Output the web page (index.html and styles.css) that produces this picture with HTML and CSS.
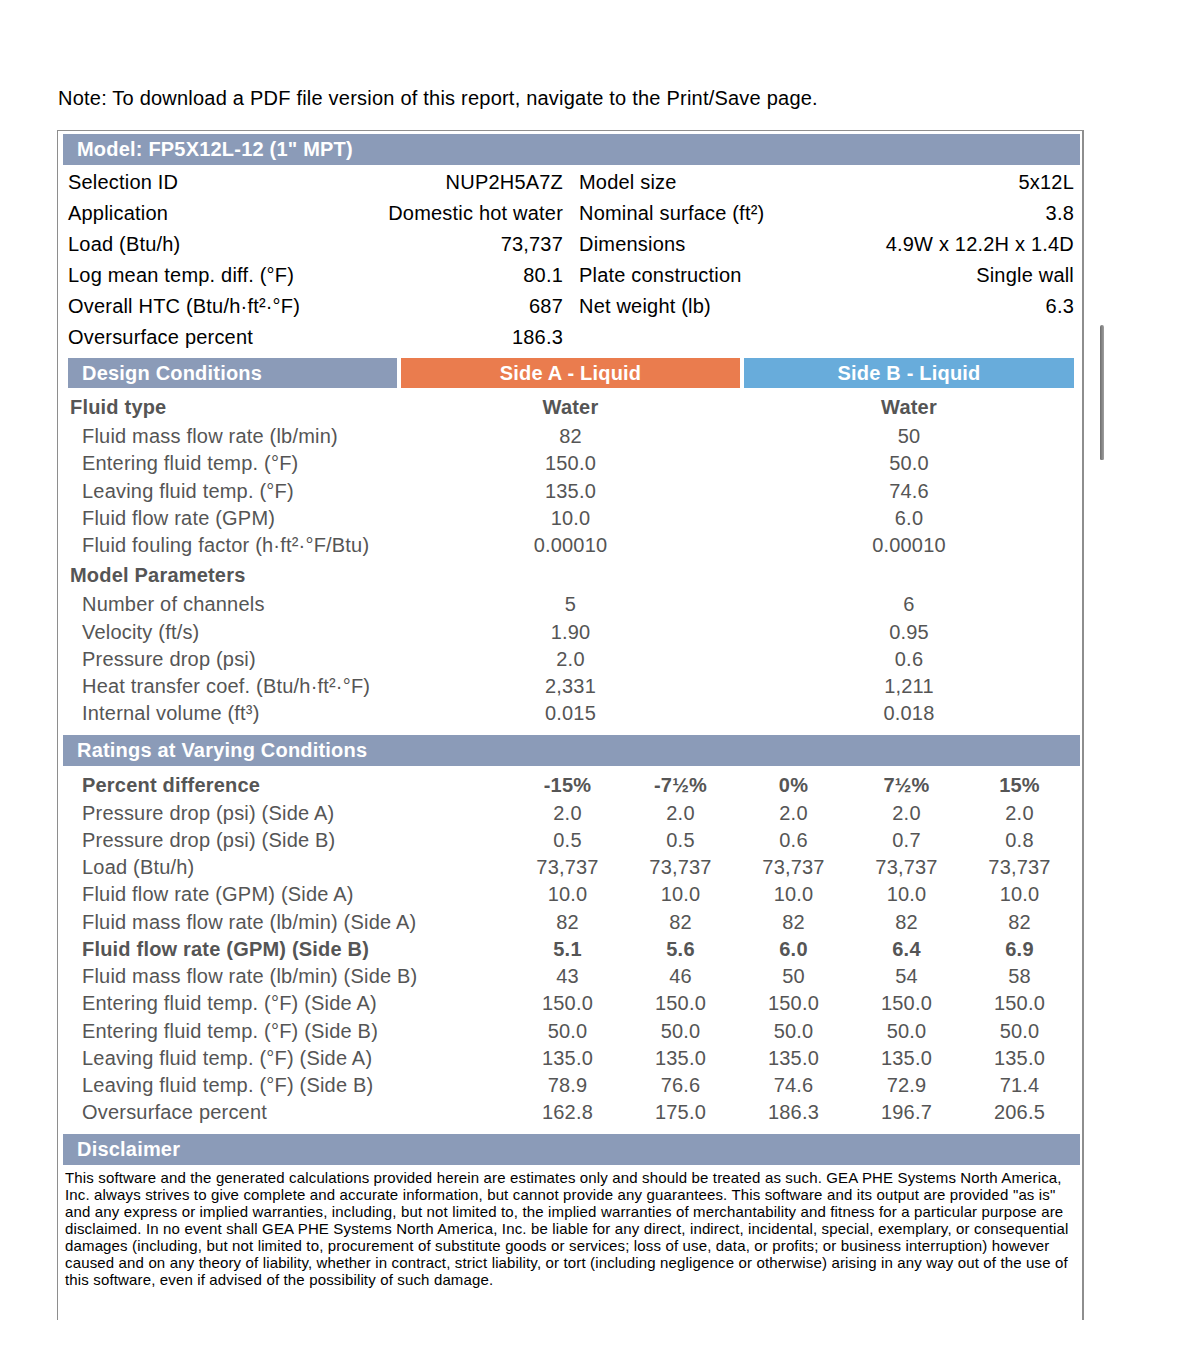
FILE: index.html
```html
<!DOCTYPE html>
<html>
<head>
<meta charset="utf-8">
<link rel="stylesheet" href="styles.css">
</head>
<body>
<div class="page">
  <p class="note">Note: To download a PDF file version of this report, navigate to the Print/Save page.</p>
  <div class="report">
    <div class="band">Model: FP5X12L-12 (1" MPT)</div>
    <div class="summary">
      <div class="pair"><span>Selection ID</span><span>NUP2H5A7Z</span></div>
      <div class="pair"><span>Model size</span><span>5x12L</span></div>
      <div class="pair"><span>Application</span><span>Domestic hot water</span></div>
      <div class="pair"><span>Nominal surface (ft²)</span><span>3.8</span></div>
      <div class="pair"><span>Load (Btu/h)</span><span>73,737</span></div>
      <div class="pair"><span>Dimensions</span><span>4.9W x 12.2H x 1.4D</span></div>
      <div class="pair"><span>Log mean temp. diff. (°F)</span><span>80.1</span></div>
      <div class="pair"><span>Plate construction</span><span>Single wall</span></div>
      <div class="pair"><span>Overall HTC (Btu/h·ft²·°F)</span><span>687</span></div>
      <div class="pair"><span>Net weight (lb)</span><span>6.3</span></div>
      <div class="pair"><span>Oversurface percent</span><span>186.3</span></div>
      <div class="pair"></div>
    </div>

    <div class="design">
      <div class="dhead dh-label">Design Conditions</div>
      <div class="dhead dh-a">Side A - Liquid</div>
      <div class="dhead dh-b">Side B - Liquid</div>

      <div class="drow bold"><span class="dl group">Fluid type</span><span class="dv">Water</span><span class="dv">Water</span></div>
      <div class="drow"><span class="dl">Fluid mass flow rate (lb/min)</span><span class="dv">82</span><span class="dv">50</span></div>
      <div class="drow"><span class="dl">Entering fluid temp. (°F)</span><span class="dv">150.0</span><span class="dv">50.0</span></div>
      <div class="drow"><span class="dl">Leaving fluid temp. (°F)</span><span class="dv">135.0</span><span class="dv">74.6</span></div>
      <div class="drow"><span class="dl">Fluid flow rate (GPM)</span><span class="dv">10.0</span><span class="dv">6.0</span></div>
      <div class="drow"><span class="dl">Fluid fouling factor (h·ft²·°F/Btu)</span><span class="dv">0.00010</span><span class="dv">0.00010</span></div>
      <div class="drow bold"><span class="dl group">Model Parameters</span><span class="dv"></span><span class="dv"></span></div>
      <div class="drow"><span class="dl">Number of channels</span><span class="dv">5</span><span class="dv">6</span></div>
      <div class="drow"><span class="dl">Velocity (ft/s)</span><span class="dv">1.90</span><span class="dv">0.95</span></div>
      <div class="drow"><span class="dl">Pressure drop (psi)</span><span class="dv">2.0</span><span class="dv">0.6</span></div>
      <div class="drow"><span class="dl">Heat transfer coef. (Btu/h·ft²·°F)</span><span class="dv">2,331</span><span class="dv">1,211</span></div>
      <div class="drow"><span class="dl">Internal volume (ft³)</span><span class="dv">0.015</span><span class="dv">0.018</span></div>
    </div>

    <div class="band band-ratings">Ratings at Varying Conditions</div>
    <div class="ratings">
      <div class="rrow bold"><span class="rl">Percent difference</span><span>-15%</span><span>-7½%</span><span>0%</span><span>7½%</span><span>15%</span></div>
      <div class="rrow"><span class="rl">Pressure drop (psi) (Side A)</span><span>2.0</span><span>2.0</span><span>2.0</span><span>2.0</span><span>2.0</span></div>
      <div class="rrow"><span class="rl">Pressure drop (psi) (Side B)</span><span>0.5</span><span>0.5</span><span>0.6</span><span>0.7</span><span>0.8</span></div>
      <div class="rrow"><span class="rl">Load (Btu/h)</span><span>73,737</span><span>73,737</span><span>73,737</span><span>73,737</span><span>73,737</span></div>
      <div class="rrow"><span class="rl">Fluid flow rate (GPM) (Side A)</span><span>10.0</span><span>10.0</span><span>10.0</span><span>10.0</span><span>10.0</span></div>
      <div class="rrow"><span class="rl">Fluid mass flow rate (lb/min) (Side A)</span><span>82</span><span>82</span><span>82</span><span>82</span><span>82</span></div>
      <div class="rrow bold"><span class="rl">Fluid flow rate (GPM) (Side B)</span><span>5.1</span><span>5.6</span><span>6.0</span><span>6.4</span><span>6.9</span></div>
      <div class="rrow"><span class="rl">Fluid mass flow rate (lb/min) (Side B)</span><span>43</span><span>46</span><span>50</span><span>54</span><span>58</span></div>
      <div class="rrow"><span class="rl">Entering fluid temp. (°F) (Side A)</span><span>150.0</span><span>150.0</span><span>150.0</span><span>150.0</span><span>150.0</span></div>
      <div class="rrow"><span class="rl">Entering fluid temp. (°F) (Side B)</span><span>50.0</span><span>50.0</span><span>50.0</span><span>50.0</span><span>50.0</span></div>
      <div class="rrow"><span class="rl">Leaving fluid temp. (°F) (Side A)</span><span>135.0</span><span>135.0</span><span>135.0</span><span>135.0</span><span>135.0</span></div>
      <div class="rrow"><span class="rl">Leaving fluid temp. (°F) (Side B)</span><span>78.9</span><span>76.6</span><span>74.6</span><span>72.9</span><span>71.4</span></div>
      <div class="rrow"><span class="rl">Oversurface percent</span><span>162.8</span><span>175.0</span><span>186.3</span><span>196.7</span><span>206.5</span></div>
    </div>

    <div class="band band-disc">Disclaimer</div>
    <p class="disclaimer">This software and the generated calculations provided herein are estimates only and should be treated as such. GEA PHE Systems North America,<br>Inc. always strives to give complete and accurate information, but cannot provide any guarantees. This software and its output are provided "as is"<br>and any express or implied warranties, including, but not limited to, the implied warranties of merchantability and fitness for a particular purpose are<br>disclaimed. In no event shall GEA PHE Systems North America, Inc. be liable for any direct, indirect, incidental, special, exemplary, or consequential<br>damages (including, but not limited to, procurement of substitute goods or services; loss of use, data, or profits; or business interruption) however<br>caused and on any theory of liability, whether in contract, strict liability, or tort (including negligence or otherwise) arising in any way out of the use of<br>this software, even if advised of the possibility of such damage.</p>
  </div>
  <div class="scroll-thumb"></div>
</div>
</body>
</html>
```

FILE: styles.css
```css
html, body {
  margin: 0;
  padding: 0;
  background: #ffffff;
}

body {
  font-family: "Liberation Sans", Arial, Helvetica, sans-serif;
  color: #000;
  letter-spacing: 0.2px;
}

.page {
  position: relative;
  padding: 86px 0 0 57px;
  width: 1100px;
}

.note {
  margin: 0 0 20px 1px;
  font-size: 20px;
  line-height: 24px;
  letter-spacing: 0.22px;
}

.report {
  width: 1017px;
  border: 1px solid #8e8e8e;
  border-right: 2px solid #8e8e8e;
  border-bottom: 0;
  padding: 3px 2px 31.5px 5px;
}

.band {
  background: #8b9bb8;
  color: #fff;
  font-weight: bold;
  font-size: 20px;
  height: 31px;
  line-height: 31px;
  padding-left: 14px;
}

.summary {
  margin: 2px 6px 0 5px;
  display: grid;
  grid-template-columns: 495px 495px;
  column-gap: 16px;
}

.pair {
  display: flex;
  justify-content: space-between;
  font-size: 20px;
  height: 31px;
  line-height: 31px;
  white-space: nowrap;
}

.design {
  margin: 5px 6px 0 5px;
  display: grid;
  grid-template-columns: 329px 339px 330px;
  column-gap: 4px;
  color: #555;
}

.dhead {
  height: 30px;
  line-height: 30px;
  color: #fff;
  font-weight: bold;
  font-size: 20px;
  margin-bottom: 3px;
}

.dh-label {
  background: #8b9bb8;
  padding-left: 14px;
}

.dh-a {
  background: #ea7c4e;
  text-align: center;
}

.dh-b {
  background: #68acdb;
  text-align: center;
}

.drow {
  display: contents;
  font-size: 20px;
}

.drow > span {
  height: 27.25px;
  line-height: 27.25px;
  white-space: nowrap;
}

.drow.bold > span {
  height: 32px;
  line-height: 32px;
  font-weight: bold;
}

.dl {
  padding-left: 14px;
}

.dl.group {
  padding-left: 2px;
}

.dv {
  text-align: center;
}

.band-ratings {
  margin-top: 7.5px;
}

.ratings {
  margin-top: 6.4px;
  display: flex;
  flex-direction: column;
  color: #555;
}

.rrow {
  display: grid;
  grid-template-columns: 448px repeat(5, 113px);
  font-size: 20px;
  height: 27.25px;
  line-height: 27.25px;
  white-space: nowrap;
}

.rrow.bold {
  font-weight: bold;
}

.rrow > span {
  text-align: center;
}

.rrow > .rl {
  text-align: left;
  padding-left: 19px;
}

.band-disc {
  margin-top: 7.35px;
}

.disclaimer {
  margin: 4.5px 0 0 2px;
  font-size: 15px;
  line-height: 17px;
  white-space: nowrap;
  letter-spacing: 0.15px;
}

.scroll-thumb {
  position: absolute;
  left: 1100px;
  top: 325px;
  width: 4px;
  height: 135px;
  border-radius: 3px 3px 2px 2px;
  background: linear-gradient(to right, #6e6e6e, #a0a0a0);
}
```
